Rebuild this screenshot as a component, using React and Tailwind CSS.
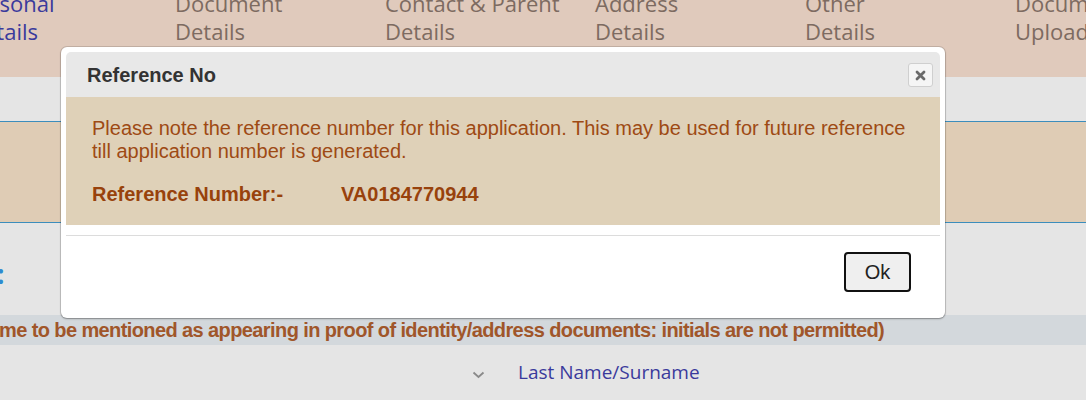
import React from 'react';

const steps = [
  { top: 'Personal', bottom: 'Details', active: true },
  { top: 'Document', bottom: 'Details' },
  { top: 'Contact & Parent', bottom: 'Details' },
  { top: 'Address', bottom: 'Details' },
  { top: 'Other', bottom: 'Details' },
  { top: 'Document', bottom: 'Upload' },
];

function CloseIcon() {
  return (
    <svg width="11" height="11" viewBox="0 0 11 11">
      <path d="M2 2 L9 9 M9 2 L2 9" stroke="#6a6a6a" strokeWidth="2.8" strokeLinecap="round" />
    </svg>
  );
}

export default function App() {
  return (
    <div className="relative w-[1086px] h-[400px] overflow-hidden bg-[#e5e5e5]" style={{ fontFamily: '"Open Sans", sans-serif' }}>
      {/* step tabs */}
      <div className="h-[77px] bg-[#e0cabc] overflow-hidden">
        <div className="flex -ml-[35px] -mt-[11px]">
          {steps.map((s, i) => (
            <div key={i} className={`w-[210px] shrink-0 text-[22px] leading-[28px] ${s.active ? 'text-[#3a3a9c]' : 'text-[#7d6b61]'}`}>
              <div>{s.top}</div>
              <div className={s.active ? 'pl-[3px]' : ''}>{s.bottom}</div>
            </div>
          ))}
        </div>
      </div>

      <div className="h-[44px]" />
      <div className="h-[102px] bg-[#dfccb5] border-y border-[#3c8dbc]" />

      <div className="h-[92px] flex items-center">
        <span className="text-[26px] font-bold text-[#2e8bd0] -ml-[3px] mt-[10px]">:</span>
      </div>

      <div className="h-[30px] bg-[#d3d8dc] flex items-center overflow-hidden whitespace-nowrap">
        <span className="text-[20px] font-bold text-[#a0562a] tracking-[-0.6px] -ml-[1px]" style={{ fontFamily: '"Liberation Sans Narrow", "Liberation Sans", Arial, sans-serif' }}>
          me to be mentioned as appearing in proof of identity/address documents: initials are not permitted)
        </span>
      </div>

      <div className="h-[55px] flex items-center">
        <div className="w-[472px]" />
        <svg width="13" height="8" viewBox="0 0 13 8" className="mt-[4px]">
          <path d="M1.5 1.5 L6.5 6 L11.5 1.5" stroke="#8a8a8a" strokeWidth="1.8" fill="none" />
        </svg>
        <span className="ml-[33px] text-[19px] text-[#3a3a9c]">Last Name/Surname</span>
      </div>

      {/* modal */}
      <div className="absolute left-[61px] top-[47px] w-[884px] h-[271px] bg-white rounded-[6px] p-[5px] shadow-[0_0_0_1px_rgba(0,0,0,0.12),0_1px_2px_rgba(0,0,0,0.3)]" style={{ fontFamily: '"Liberation Sans", Arial, sans-serif' }}>
        <div className="h-[45px] bg-[#e8e8e8] rounded-t-[5px] flex items-center justify-between pl-[21px] pr-[7px]">
          <span className="text-[20px] font-bold text-[#333]">Reference No</span>
          <button className="w-[25px] h-[24px] bg-[#f5f5f5] border border-[#cfcfcf] rounded-[3px] flex items-center justify-center mt-[1px]">
            <CloseIcon />
          </button>
        </div>
        <div className="h-[128px] bg-[#dfd1b8] pl-[26px] pr-[20px] pt-[20px] text-[20px] leading-[23px] text-[#9e4a14]">
          <p>Please note the reference number for this application. This may be used for future reference till application number is generated.</p>
          <div className="flex font-bold text-[#98420c] mt-[20px]">
            <span className="w-[249px]">Reference Number:-</span>
            <span>VA0184770944</span>
          </div>
        </div>
        <div className="h-[10px]" />
        <div className="border-t border-[#dcdcdc] flex justify-end pt-[16px] pr-[29px]">
          <button className="w-[67px] h-[40px] border-2 border-[#111] rounded-[4px] bg-[#efefef] text-[20px] text-[#222]">Ok</button>
        </div>
      </div>
    </div>
  );
}
